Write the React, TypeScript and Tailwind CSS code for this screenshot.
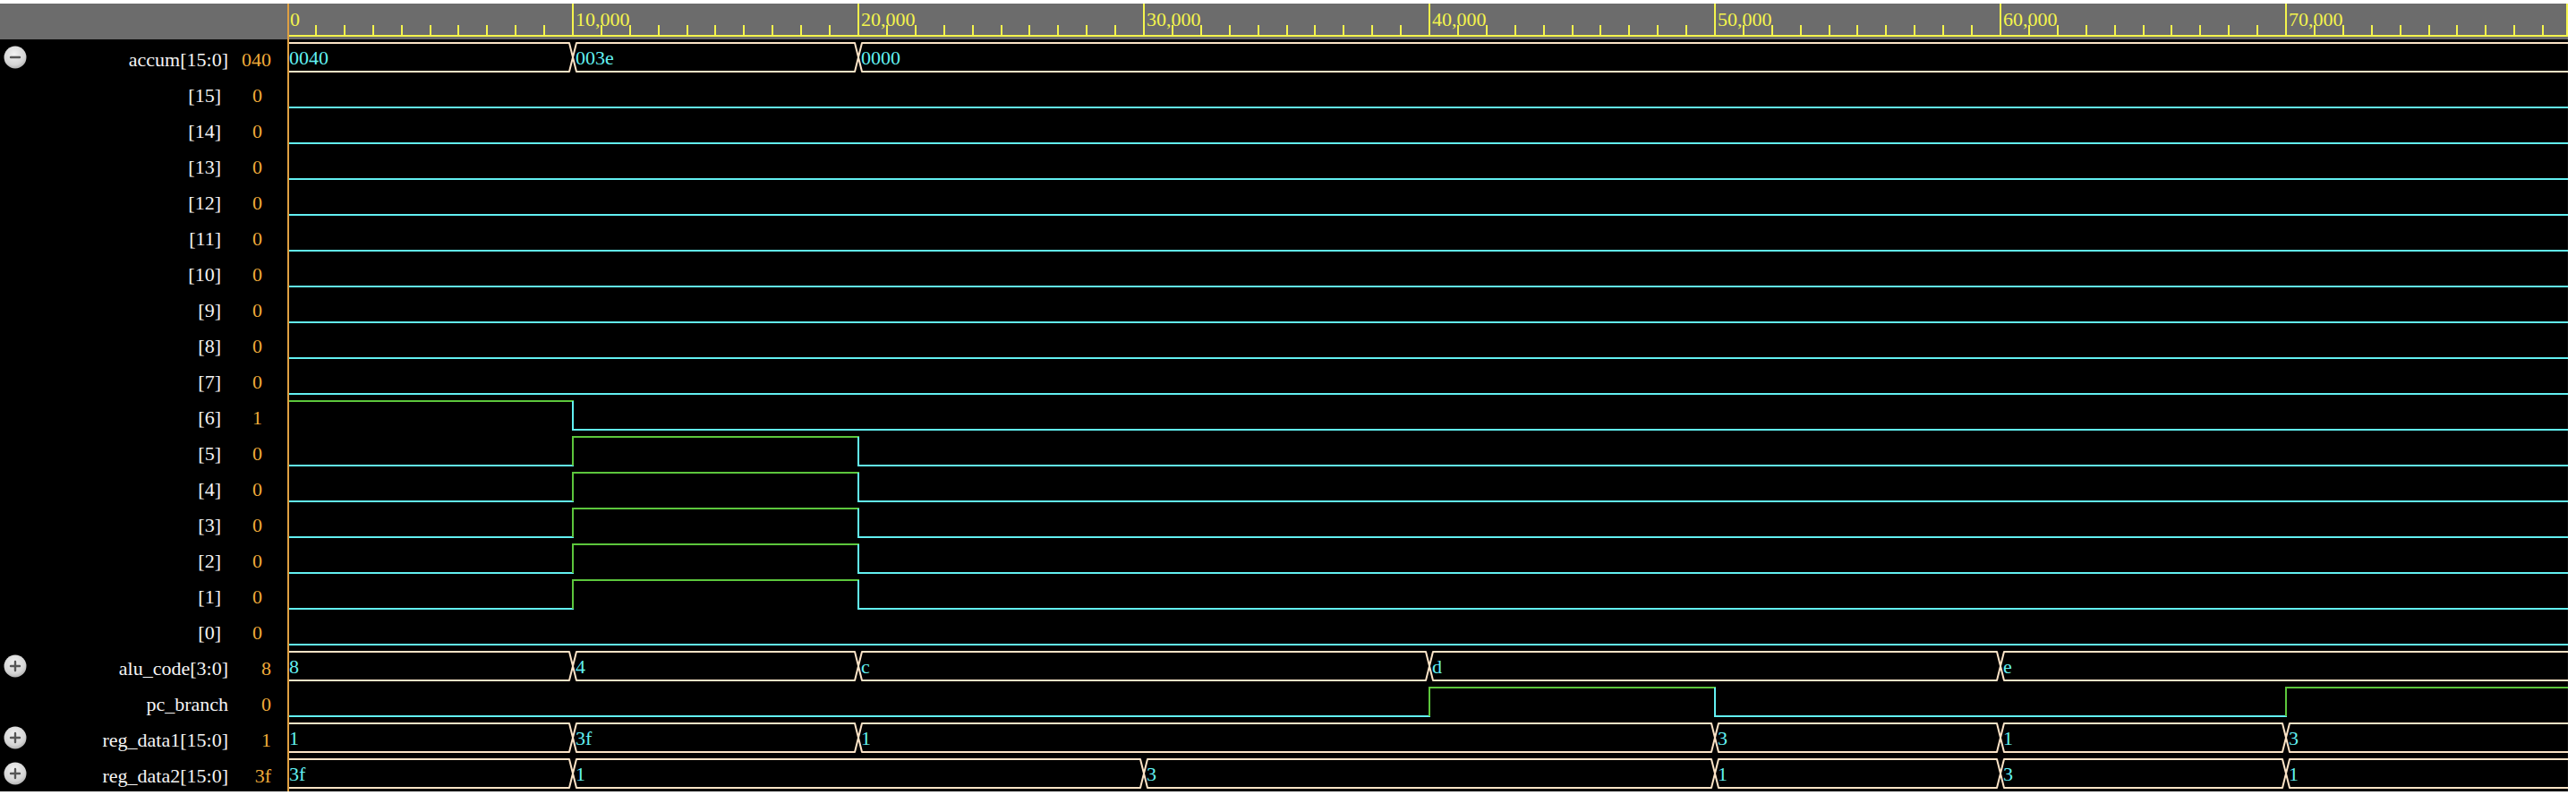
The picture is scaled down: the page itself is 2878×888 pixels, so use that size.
import { useId } from "react";

const PX = 0.0319; // px per time unit
const W = 2546; // width of the wave area
const xOf = (t: number) => Math.round(t * PX - 2);

const CYAN = "#62f0f2";
const GREEN = "#5cc63c";
const BUS = "#fbe3c6";
const YELLOW = "#f4f44c";

type BusSeg = [number, string];
type BitSeg = [number, number];

type Row =
  | { name: string; value: string; kind: "bus"; segs: BusSeg[]; toggle: "open" | "closed" }
  | { name: string; value: string; kind: "bit"; segs: BitSeg[]; sub?: boolean };

const low: BitSeg[] = [[0, 0]];
const pulse: BitSeg[] = [
  [0, 0],
  [10000, 1],
  [20000, 0],
];

const rows: Row[] = [
  {
    name: "accum[15:0]",
    value: "040",
    kind: "bus",
    toggle: "open",
    segs: [
      [0, "0040"],
      [10000, "003e"],
      [20000, "0000"],
    ],
  },
  ...[15, 14, 13, 12, 11, 10, 9, 8, 7].map(
    (n): Row => ({ name: `[${n}]`, value: "0", kind: "bit", segs: low, sub: true })
  ),
  {
    name: "[6]",
    value: "1",
    kind: "bit",
    sub: true,
    segs: [
      [0, 1],
      [10000, 0],
    ],
  },
  ...[5, 4, 3, 2, 1].map(
    (n): Row => ({ name: `[${n}]`, value: "0", kind: "bit", segs: pulse, sub: true })
  ),
  { name: "[0]", value: "0", kind: "bit", segs: low, sub: true },
  {
    name: "alu_code[3:0]",
    value: "8",
    kind: "bus",
    toggle: "closed",
    segs: [
      [0, "8"],
      [10000, "4"],
      [20000, "c"],
      [40000, "d"],
      [60000, "e"],
    ],
  },
  {
    name: "pc_branch",
    value: "0",
    kind: "bit",
    segs: [
      [0, 0],
      [40000, 1],
      [50000, 0],
      [70000, 1],
    ],
  },
  {
    name: "reg_data1[15:0]",
    value: "1",
    kind: "bus",
    toggle: "closed",
    segs: [
      [0, "1"],
      [10000, "3f"],
      [20000, "1"],
      [50000, "3"],
      [60000, "1"],
      [70000, "3"],
    ],
  },
  {
    name: "reg_data2[15:0]",
    value: "3f",
    kind: "bus",
    toggle: "closed",
    segs: [
      [0, "3f"],
      [10000, "1"],
      [30000, "3"],
      [50000, "1"],
      [60000, "3"],
      [70000, "1"],
    ],
  },
];

function Toggle({ open }: { open: boolean }) {
  const id = useId();
  return (
    <svg width="26" height="26" viewBox="0 0 26 26">
      <defs>
        <radialGradient id={id} cx="45%" cy="35%" r="70%">
          <stop offset="0" stopColor="#f2f2f2" />
          <stop offset="0.7" stopColor="#d4d4d4" />
          <stop offset="1" stopColor="#a9a9a9" />
        </radialGradient>
      </defs>
      <circle cx="13" cy="13" r="12.5" fill={`url(#${id})`} />
      <path d="M8 13h10" stroke="#575757" strokeWidth="2.4" strokeLinecap="round" />
      {!open && <path d="M13 8v10" stroke="#575757" strokeWidth="2.4" strokeLinecap="round" />}
    </svg>
  );
}

function Ruler() {
  const ticks = [];
  for (let t = 0; t < 80000; t += 1000) ticks.push(t);
  return (
    <svg width={W} height="40" className="block">
      {ticks.map((t) => {
        const x = xOf(t);
        const major = t % 10000 === 0;
        return (
          <g key={t}>
            <line x1={x} x2={x} y1={major ? 0 : 24} y2={36} stroke={YELLOW} strokeWidth="2" />
            {major && (
              <text x={x + 3} y={25} fill={YELLOW} fontSize="22" fontFamily="'Liberation Serif', serif">
                {t.toLocaleString("en-US")}
              </text>
            )}
          </g>
        );
      })}
      <line x1={0} x2={W} y1={36} y2={36} stroke={YELLOW} strokeWidth="2" />
      <line x1={W - 1} x2={W - 1} y1={0} y2={36} stroke={YELLOW} strokeWidth="2" />
    </svg>
  );
}

function BusWave({ segs }: { segs: BusSeg[] }) {
  return (
    <svg width={W} height="40" className="block">
      {segs.map(([t, v], i) => {
        const xa = xOf(t);
        const xb = i + 1 < segs.length ? xOf(segs[i + 1][0]) : W + 20;
        const d =
          i === 0
            ? `M${xa} 4 L${xb - 4} 4 L${xb} 20 L${xb - 4} 36 L${xa} 36`
            : `M${xa} 20 L${xa + 4} 4 L${xb - 4} 4 L${xb} 20 L${xb - 4} 36 L${xa + 4} 36 Z`;
        return (
          <g key={t}>
            <path d={d} fill="none" stroke={BUS} strokeWidth="2" strokeLinejoin="round" />
            <text
              x={i === 0 ? 0 : xa + 3}
              y={28}
              fill={CYAN}
              fontSize="22"
              fontFamily="'Liberation Serif', serif"
            >
              {v}
            </text>
          </g>
        );
      })}
    </svg>
  );
}

function BitWave({ segs }: { segs: BitSeg[] }) {
  const yOf = (v: number) => (v ? 4 : 36);
  return (
    <svg width={W} height="40" className="block">
      {segs.map(([t, v], i) => {
        const xa = Math.max(xOf(t), 0);
        const xb = i + 1 < segs.length ? xOf(segs[i + 1][0]) : W;
        const c = v ? GREEN : CYAN;
        return (
          <g key={t}>
            <line x1={xa} x2={xb} y1={yOf(v)} y2={yOf(v)} stroke={c} strokeWidth="2" strokeLinecap="square" />
            {i > 0 && (
              <line x1={xa} x2={xa} y1={yOf(segs[i - 1][1])} y2={yOf(v)} stroke={c} strokeWidth="2" />
            )}
          </g>
        );
      })}
    </svg>
  );
}

export default function App() {
  return (
    <div className="w-[2869px] bg-white pt-[4px] font-['Liberation_Serif',serif]">
      <div className="flex">
        {/* signal names */}
        <div className="w-[321px] shrink-0 bg-black">
          <div className="h-[40px] bg-[#6c6c6c]" />
          {rows.map((r) => {
            const sub = r.kind === "bit" && r.sub;
            return (
              <div key={r.name} className="flex h-[40px] items-center text-[22px]">
                <div className="flex w-[34px] shrink-0 items-center pl-[4px]">
                  {r.kind === "bus" && <Toggle open={r.toggle === "open"} />}
                </div>
                <span className={`flex-1 pt-[5px] text-right leading-[22px] text-[#f4f4f4] ${sub ? "pr-[8px]" : ""}`}>
                  {r.name}
                </span>
                <span className={`w-[48px] pt-[5px] text-right leading-[22px] text-[#f0ab3a] ${sub ? "pr-[10px]" : ""}`}>
                  {r.value}
                </span>
                <div className="w-[18px] shrink-0" />
              </div>
            );
          })}
        </div>

        {/* waves */}
        <div className="w-[2548px] shrink-0 overflow-hidden border-l-2 border-[#dfa042] bg-black">
          <div className="h-[40px] bg-[#6c6c6c]">
            <Ruler />
          </div>
          {rows.map((r) => (
            <div key={r.name} className="h-[40px]">
              {r.kind === "bus" ? <BusWave segs={r.segs} /> : <BitWave segs={r.segs} />}
            </div>
          ))}
        </div>
      </div>
    </div>
  );
}
